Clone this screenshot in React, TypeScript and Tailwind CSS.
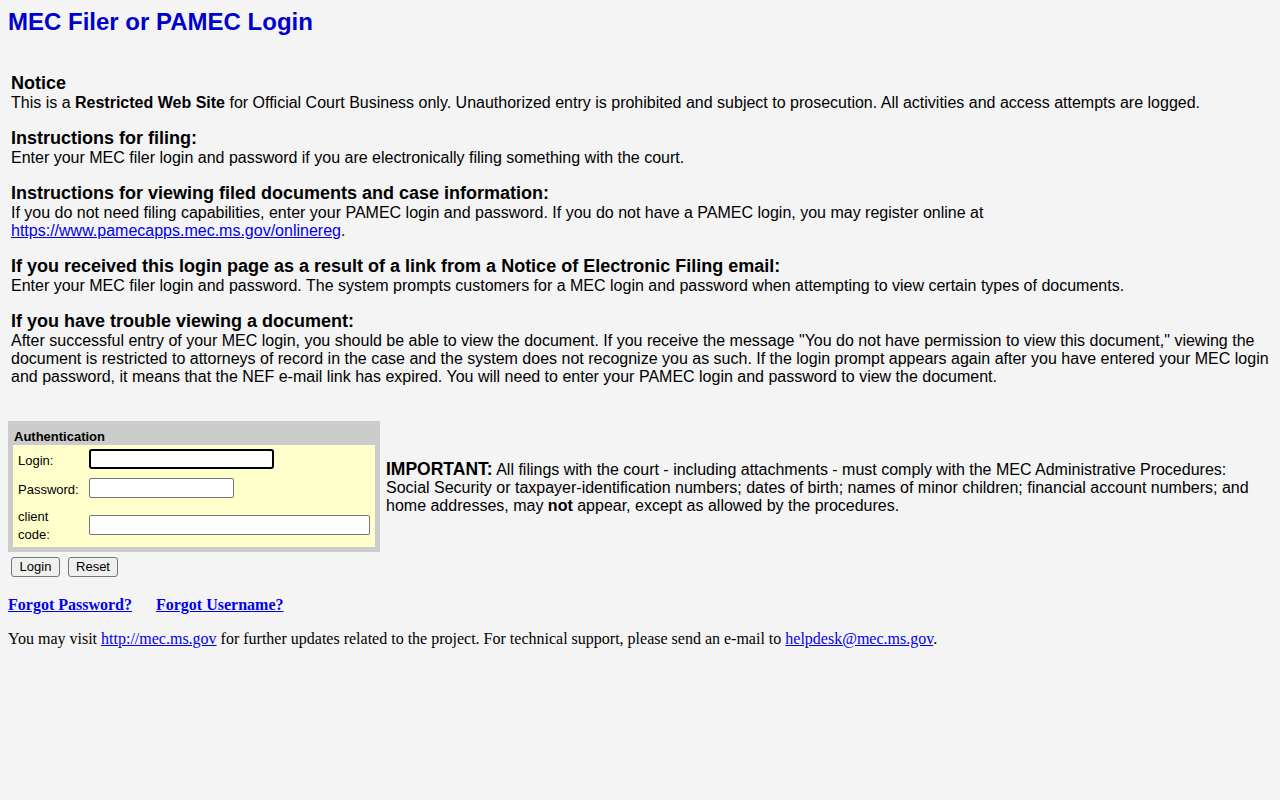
export default function App() {
  const sans = "font-['Liberation_Sans',Arial,sans-serif]"
  const serif = "font-['Liberation_Serif','Times_New_Roman',serif]"

  const sections = [
    {
      title: "Notice",
      body: (
        <>
          This is a <b>Restricted Web Site</b> for Official Court Business only. Unauthorized entry is prohibited and
          subject to prosecution. All activities and access attempts are logged.
        </>
      ),
    },
    {
      title: "Instructions for filing:",
      body: <>Enter your MEC filer login and password if you are electronically filing something with the court.</>,
    },
    {
      title: "Instructions for viewing filed documents and case information:",
      body: (
        <>
          If you do not need filing capabilities, enter your PAMEC login and password. If you do not have a PAMEC
          login, you may register online at
          <br />
          <a href="#" className="text-[#0000ee] underline">
            https://www.pamecapps.mec.ms.gov/onlinereg
          </a>
          .
        </>
      ),
    },
    {
      title: "If you received this login page as a result of a link from a Notice of Electronic Filing email:",
      body: (
        <>
          Enter your MEC filer login and password. The system prompts customers for a MEC login and password when
          attempting to view certain types of documents.
        </>
      ),
    },
    {
      title: "If you have trouble viewing a document:",
      body: (
        <>
          After successful entry of your MEC login, you should be able to view the document. If you receive the
          message "You do not have permission to view this document," viewing the document is restricted to attorneys
          of record in the case and the system does not recognize you as such. If the login prompt appears again after
          you have entered your MEC login and password, it means that the NEF e-mail link has expired. You will need to
          enter your PAMEC login and password to view the document.
        </>
      ),
    },
  ]

  return (
    <div className={`min-h-screen bg-[#f4f4f4] p-2 text-black ${sans}`}>
      <h2 className="text-[24px] font-bold leading-[28px] text-[#0000cc]">MEC Filer or PAMEC Login</h2>

      <div className="mt-[37px] flex flex-col gap-[16px] px-[3px]">
        {sections.map((s, i) => (
          <div key={i}>
            <div className="text-[18px] font-bold leading-[21px]">{s.title}</div>
            <div className="text-[16px] leading-[18px]">{s.body}</div>
          </div>
        ))}
      </div>

      <div className="mt-[35px] flex items-center gap-[6px]">
        <div className="w-[372px] shrink-0 bg-[#cccccc] px-[5px] pb-[5px] pt-[8px]">
          <div className="pb-[1px] pl-[1px] text-[13px] font-bold leading-[15px]">Authentication</div>
          <div className="flex flex-col gap-[9px] bg-[#ffffcc] px-[5px] py-[4px] text-[13px] leading-[18px]">
            <div className="flex h-[20px] items-center">
              <span className="w-[71px] shrink-0 pt-[4px]">Login:</span>
              <input
                type="text"
                className="h-[20px] w-[185px] rounded-[3px] border-2 border-black bg-white outline-none"
              />
            </div>
            <div className="flex h-[20px] items-center">
              <span className="w-[71px] shrink-0 pt-[4px]">Password:</span>
              <input
                type="password"
                className="h-[20px] w-[145px] rounded-[2px] border border-[#767676] bg-white outline-none"
              />
            </div>
            <div className="flex h-[36px] items-center">
              <span className="w-[71px] shrink-0 pt-[2px]">
                client
                <br />
                code:
              </span>
              <input
                type="text"
                className="h-[20px] w-[281px] rounded-[2px] border border-[#767676] bg-white outline-none"
              />
            </div>
          </div>
        </div>
        <div className="pt-[1px] text-[16px] leading-[18px]">
          <b className="text-[17.5px] leading-[20px]">IMPORTANT:</b> All filings with the court - including
          attachments - must comply with the MEC Administrative Procedures: Social Security or taxpayer-identification
          numbers; dates of birth; names of minor children; financial account numbers; and home addresses, may{" "}
          <b>not</b> appear, except as allowed by the procedures.
        </div>
      </div>

      <div className="mt-[5px] flex gap-[8px] pl-[3px]">
        <button className="h-[20px] w-[49px] rounded-[3px] border border-[#767676] bg-[#efefef] text-[13px] leading-[18px]">
          Login
        </button>
        <button className="h-[20px] w-[50px] rounded-[3px] border border-[#767676] bg-[#efefef] text-[13px] leading-[18px]">
          Reset
        </button>
      </div>

      <div className={`mt-[19px] flex gap-[24px] text-[16px] font-bold leading-[18px] ${serif}`}>
        <a href="#" className="text-[#0000ee] underline">
          Forgot Password?
        </a>
        <a href="#" className="text-[#0000ee] underline">
          Forgot Username?
        </a>
      </div>

      <p className={`mt-[16px] text-[16px] leading-[18px] ${serif}`}>
        You may visit{" "}
        <a href="#" className="text-[#0000ee] underline">
          http://mec.ms.gov
        </a>{" "}
        for further updates related to the project. For technical support, please send an e-mail to{" "}
        <a href="#" className="text-[#0000ee] underline">
          helpdesk@mec.ms.gov
        </a>
        .
      </p>
    </div>
  )
}
